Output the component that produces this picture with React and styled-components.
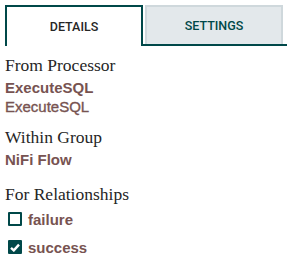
import styled, { createGlobalStyle } from 'styled-components';

const GlobalStyle = createGlobalStyle`
    body {
        margin: 0;
        background: #ffffff;
    }
`

const Page = styled.div`
    padding: 5px 0 0 5px;
    width: 287px;
    box-sizing: border-box;
`

const TabBar = styled.div`
    display: flex;
    border-bottom: 2px solid #004849;
`

const Tab = styled.div`
    width: 138px;
    box-sizing: border-box;
    display: flex;
    align-items: center;
    justify-content: center;
    font-family: Roboto, "Liberation Sans", sans-serif;
    font-weight: 500;
    font-size: 12.5px;
    text-transform: uppercase;
    margin-bottom: ${(props) => (props.active ? '-2px' : '0')};
    height: ${(props) => (props.active ? '41px' : '39px')};
    color: ${(props) => (props.active ? '#262626' : '#004849')};
    background: ${(props) => (props.active ? '#ffffff' : '#e3e8eb')};
    border: 2px solid ${(props) => (props.active ? '#004849' : '#cfd8dc')};
    border-bottom: none;
    margin-left: ${(props) => (props.active ? '0' : '2px')};
`

const Details = styled.div`
    padding-top: 8px;
`

const Section = styled.div`
    margin-bottom: ${(props) => props.space || 10}px;
`

const Label = styled.div`
    font-family: "Liberation Serif", serif;
    font-size: 17.5px;
    color: #262626;
    line-height: 22px;
    margin-bottom: 2px;
`

const Value = styled.div`
    font-family: "Liberation Sans", Arial, sans-serif;
    font-size: 15px;
    line-height: 19px;
    color: #775351;
    font-weight: ${(props) => (props.bold ? 700 : 400)};
    -webkit-text-stroke: ${(props) => (props.bold ? '0' : '0.35px #775351')};
`

const RelationLabel = styled(Label)`
    margin-bottom: 0;
`

const Relation = styled.div`
    display: flex;
    align-items: center;
    gap: 6px;
    margin-left: 3px;
    height: 28px;
`

const Box = styled.span`
    width: 14px;
    height: 14px;
    box-sizing: border-box;
    border: 2.5px solid #004849;
    border-radius: 1px;
    background: ${(props) => (props.checked ? '#004849' : '#ffffff')};
    display: flex;
    align-items: center;
    justify-content: center;
`

const relationships = [
    { name: 'failure', checked: false },
    { name: 'success', checked: true },
]

const App = () => {
    return (
        <>
            <GlobalStyle />
            <Page>
                <TabBar>
                    <Tab active>Details</Tab>
                    <Tab>Settings</Tab>
                </TabBar>
                <Details>
                    <Section>
                        <Label>From Processor</Label>
                        <Value bold>ExecuteSQL</Value>
                        <Value>ExecuteSQL</Value>
                    </Section>
                    <Section space={14}>
                        <Label>Within Group</Label>
                        <Value bold>NiFi Flow</Value>
                    </Section>
                    <RelationLabel>For Relationships</RelationLabel>
                    {relationships.map((r) => (
                        <Relation key={r.name}>
                            <Box checked={r.checked}>
                                {r.checked && (
                                    <svg width="10" height="9" viewBox="0 0 10 9">
                                        <path d="M1 4.8 L3.8 7.4 L9 1.6" stroke="#fff" strokeWidth="2.4" fill="none" />
                                    </svg>
                                )}
                            </Box>
                            <Value bold>{r.name}</Value>
                        </Relation>
                    ))}
                </Details>
            </Page>
        </>
    )
}

export default App;
